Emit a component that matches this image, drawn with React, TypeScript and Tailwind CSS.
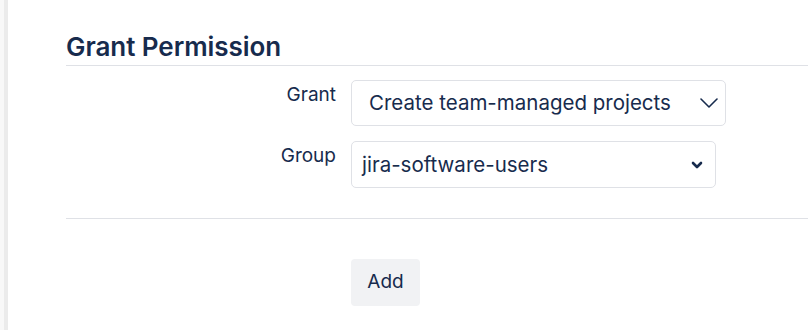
import React from "react";

function ThinChevron() {
  return (
    <svg width="18" height="10" viewBox="0 0 18 10" fill="none">
      <path d="M1 1l8 8 8-8" stroke="#172B4D" strokeWidth="1.6" strokeLinecap="round" strokeLinejoin="round" />
    </svg>
  );
}

function BoldChevron() {
  return (
    <svg width="12" height="8" viewBox="0 0 12 8" fill="none">
      <path d="M2 2l4 4 4-4" stroke="#172B4D" strokeWidth="2.6" strokeLinecap="round" strokeLinejoin="round" />
    </svg>
  );
}

export default function App() {
  return (
    <div
      className="flex h-[330px] w-[808px] overflow-hidden bg-white text-[#172B4D]"
      style={{ fontFamily: "Inter, 'Noto Sans', sans-serif" }}
    >
      <div className="w-[4px] shrink-0 bg-[#f8f8f8]" />
      <div className="w-[4px] shrink-0 bg-[#ebebeb]" />
      <div className="flex flex-1 flex-col pl-[58px] pt-[32px]">
        <h2 className="border-b border-[#dfe1e6] pb-[3px] text-[26px] font-semibold leading-[30px] tracking-[-0.05px] text-[#172B4D]">
          Grant Permission
        </h2>
        <div className="mt-[14px] flex flex-col gap-[15px]">
          <div className="flex items-start gap-[15px]">
            <div className="w-[270px] pt-[3px] text-right text-[19px] leading-[24px]">Grant</div>
            <div className="flex h-[46px] w-[375px] items-center justify-between rounded-[5px] border border-[#dfe1e6] pl-[17px] pr-[7px]">
              <span className="text-[20.5px] leading-[24px]">Create team-managed projects</span>
              <ThinChevron />
            </div>
          </div>
          <div className="flex items-start gap-[15px]">
            <div className="w-[270px] pt-[3px] text-right text-[19px] leading-[24px]">Group</div>
            <div className="flex h-[47px] w-[365px] items-center justify-between rounded-[5px] border border-[#dfe1e6] pl-[10px] pr-[12px]">
              <span className="text-[20.5px] leading-[24px]">jira-software-users</span>
              <BoldChevron />
            </div>
          </div>
        </div>
        <div className="mt-[30px] border-t border-[#dfe1e6]" />
        <div className="mt-[40px] pl-[285px]">
          <button className="h-[47px] w-[69px] rounded-[4px] bg-[#f1f2f4] text-[19px] text-[#172B4D]">
            Add
          </button>
        </div>
      </div>
    </div>
  );
}
